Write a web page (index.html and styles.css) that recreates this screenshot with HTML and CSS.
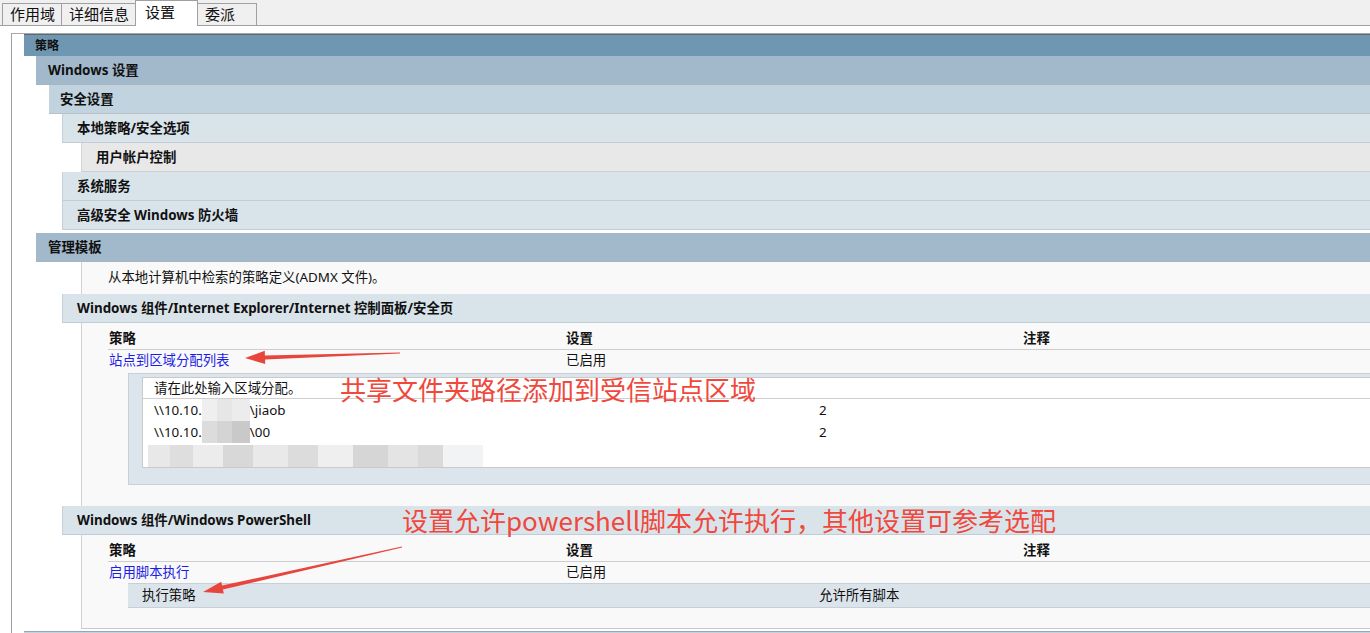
FILE: index.html
```html
<!DOCTYPE html>
<html lang="zh-CN">
<head>
    <meta charset="UTF-8">
    <link rel="stylesheet" href="styles.css">
</head>
<body>
    <div class="tabs">
        <div class="tab">作用域</div>
        <div class="tab">详细信息</div>
        <div class="tab active">设置</div>
        <div class="tab wide">委派</div>
    </div>

    <div class="page">
        <div class="frame">
            <div class="h h1">策略</div>
            <div class="sub s12">
                <div class="h h2">Windows 设置</div>
                <div class="sub s13">
                    <div class="h h3">安全设置</div>
                    <div class="sub s13">
                        <div class="h h4">本地策略/安全选项</div>
                        <div class="sub s19">
                            <div class="h h5">用户帐户控制</div>
                        </div>
                        <div class="h h4">系统服务</div>
                        <div class="h h4">高级安全 Windows 防火墙</div>
                    </div>
                </div>

                <div class="h h2 gap">管理模板</div>
                <div class="tmpl">
                    <p class="desc">从本地计算机中检索的策略定义(ADMX 文件)。</p>

                    <div class="h h4 cat">Windows 组件/Internet Explorer/Internet 控制面板/安全页</div>
                    <div class="cat-body">
                        <div class="grid thead">
                            <span>策略</span><span>设置</span><span>注释</span>
                        </div>
                        <div class="grid trow">
                            <a class="link">站点到区域分配列表</a><span>已启用</span><span></span>
                        </div>
                        <div class="zone">
                            <div class="zone-list">
                                <div class="zone-head">请在此处输入区域分配。</div>
                                <div class="zone-row">
                                    <span>\\10.10.<i class="blur"></i>\jiaob</span><span>2</span>
                                </div>
                                <div class="zone-row">
                                    <span>\\10.10.<i class="blur b2"></i>\00</span><span>2</span>
                                </div>
                                <div class="zone-row"><i class="blur long"></i></div>
                            </div>
                        </div>
                    </div>

                    <div class="h h4 cat">Windows 组件/Windows PowerShell</div>
                    <div class="cat-body last">
                        <div class="grid thead">
                            <span>策略</span><span>设置</span><span>注释</span>
                        </div>
                        <div class="grid trow">
                            <a class="link">启用脚本执行</a><span>已启用</span><span></span>
                        </div>
                        <div class="subrow">
                            <span>执行策略</span><span>允许所有脚本</span>
                        </div>
                    </div>
                </div>
            </div>
            <div class="h1 next"></div>
        </div>
    </div>

    <div class="note note1">共享文件夹路径添加到受信站点区域</div>
    <div class="note note2">设置允许powershell脚本允许执行，其他设置可参考选配</div>

    <svg class="arrows" width="1370" height="633" viewBox="0 0 1370 633">
        <polygon points="400,353.6 265.1,359.4 265.2,364 245,358 264.8,350.8 264.9,355.4 400,352.4"/>
        <polygon points="402.1,547.6 222.9,589.6 223.8,593.5 203,592 221.2,581.7 222.1,585.6 401.9,546.4"/>
    </svg>
</body>
</html>
```

FILE: styles.css
```css
body {
    margin: 0;
    width: 1370px;
    height: 633px;
    overflow: hidden;
    position: relative;
    font-family: "Noto Sans", "Noto Sans CJK SC", sans-serif;
    font-size: 13.4px;
    color: #111;
    background: #fff;
}
.tabs {
    display: flex;
    align-items: flex-end;
    height: 25px;
    padding-left: 2px;
    background: #f0f0f0;
    border-bottom: 1px solid #a0a0a0;
}
.tab {
    height: 21px;
    line-height: 21px;
    padding: 0 6px 0 7px;
    margin-right: -1px;
    font-size: 15px;
    color: #111;
    background: #f0f0f0;
    border: 1px solid #a0a0a0;
    border-bottom: none;
}
.tab.active {
    height: 25px;
    line-height: 23px;
    width: 46px;
    padding-left: 9px;
    margin-bottom: -1px;
    background: #fff;
    position: relative;
}
.tab.wide {
    width: 45px;
}
.page {
    padding-top: 7px;
}
.frame {
    margin-left: 11px;
    border-left: 1px solid #a0a0a0;
    border-top: 1px solid #a8a8a8;
    padding-left: 12px;
}
.sub.s12 { padding-left: 12px; }
.sub.s13 { padding-left: 13px; }
.sub.s19 { padding-left: 19px; }
.h {
    height: 28px;
    line-height: 28px;
    font-weight: bold;
    border-bottom: 1px solid #b9c3cb;
    white-space: nowrap;
}
.h1 {
    height: 21px;
    line-height: 21px;
    padding-left: 11px;
    font-size: 12px;
    background: #7097b2;
    border-top: 1px solid #5d6a73;
    border-bottom: none;
}
.h2 {
    padding-left: 12px;
    background: #a2b8cb;
    border-bottom-color: #a9b4be;
}
.h2.gap { margin-top: 3px; }
.h3 {
    padding-left: 11px;
    background: #c0d3de;
    border-bottom-color: #b8c1c8;
}
.h4 {
    padding-left: 14px;
    background: #d9e4ea;
    border-left: 1px solid #c6d0d8;
    border-bottom-color: #c2ccd4;
}
.h5 {
    padding-left: 14px;
    background: #e8e8e8;
    border-left: 1px solid #d4d4d4;
    border-bottom-color: #cfcfcf;
}
.tmpl {
    margin-left: 45px;
    border-left: 1px solid #d2d2d2;
    border-bottom: 1px solid #c8c8c8;
    background: #f9f9f9;
}
.desc {
    margin: 0;
    height: 32px;
    line-height: 30px;
    padding-left: 26px;
}
.h.cat {
    margin-left: -20px;
}
.cat-body {
    padding: 3px 0 21px 26px;
}
.cat-body.last {
    padding-bottom: 20px;
}
.grid {
    display: grid;
    grid-template-columns: 457px 457px 1fr;
}
.grid span, .grid a {
    padding-left: 1px;
}
.thead {
    height: 23px;
    line-height: 24px;
    font-weight: bold;
    border-bottom: 1px solid #cdcdcd;
}
.trow {
    height: 21px;
    line-height: 21px;
}
.link {
    color: #1c1ce6;
}
.zone {
    margin: 2px 0 0 20px;
    padding: 3px 0 16px 13px;
    background: #dce5eb;
    border: 1px solid #c7d0d7;
    border-right: none;
}
.zone-list {
    height: 89px;
    background: #fff;
    border: 1px solid #cacaca;
    border-right: none;
}
.zone-head {
    height: 20px;
    line-height: 20px;
    padding-left: 11px;
    border-bottom: 1px solid #cfcfcf;
}
.zone-row {
    display: grid;
    grid-template-columns: 665px 1fr;
    height: 22px;
    line-height: 22px;
    padding-left: 11px;
}
.blur {
    display: inline-block;
    width: 48px;
    height: 22px;
    vertical-align: top;
    background: linear-gradient(90deg, #efefef 0 15px, #e6e6e6 15px 30px, #ececec 30px);
}
.blur.b2 {
    background: linear-gradient(90deg, #dcdcdc 0 15px, #d4d4d4 15px 30px, #c9c9c9 30px);
}
.blur.long {
    width: 335px;
    margin: 2px 0 0 -6px;
    background:
        linear-gradient(90deg, #e8e8e8 0 22px, #dedede 22px 45px, #ececec 45px 75px, #d8d8d8 75px 105px, #e9e9e9 105px 140px, #dcdcdc 140px 170px, #efefef 170px 205px, #d6d6d6 205px 240px, #e4e4e4 240px 270px, #dadada 270px 295px, #f2f3f5 295px);
}
.subrow {
    display: grid;
    grid-template-columns: 677px 1fr;
    margin-left: 20px;
    height: 23px;
    line-height: 23px;
    padding-left: 14px;
    background: #dbe4ea;
    border-top: 1px solid #c8d0d7;
    border-bottom: 1px solid #c8d0d7;
}
.next {
    margin-top: 2px;
    height: 20px;
    background: #c4d2dc;
    border-top: 1px solid #98a6b2;
}
.note {
    position: absolute;
    color: #f0483c;
    font-family: "Noto Sans CJK SC", sans-serif;
    font-size: 26px;
    line-height: 30px;
    white-space: nowrap;
}
.note1 { left: 340px; top: 374px; }
.note2 { left: 402px; top: 505px; }
.arrows {
    position: absolute;
    left: 0;
    top: 0;
    pointer-events: none;
    fill: #e8453c;
}
```
